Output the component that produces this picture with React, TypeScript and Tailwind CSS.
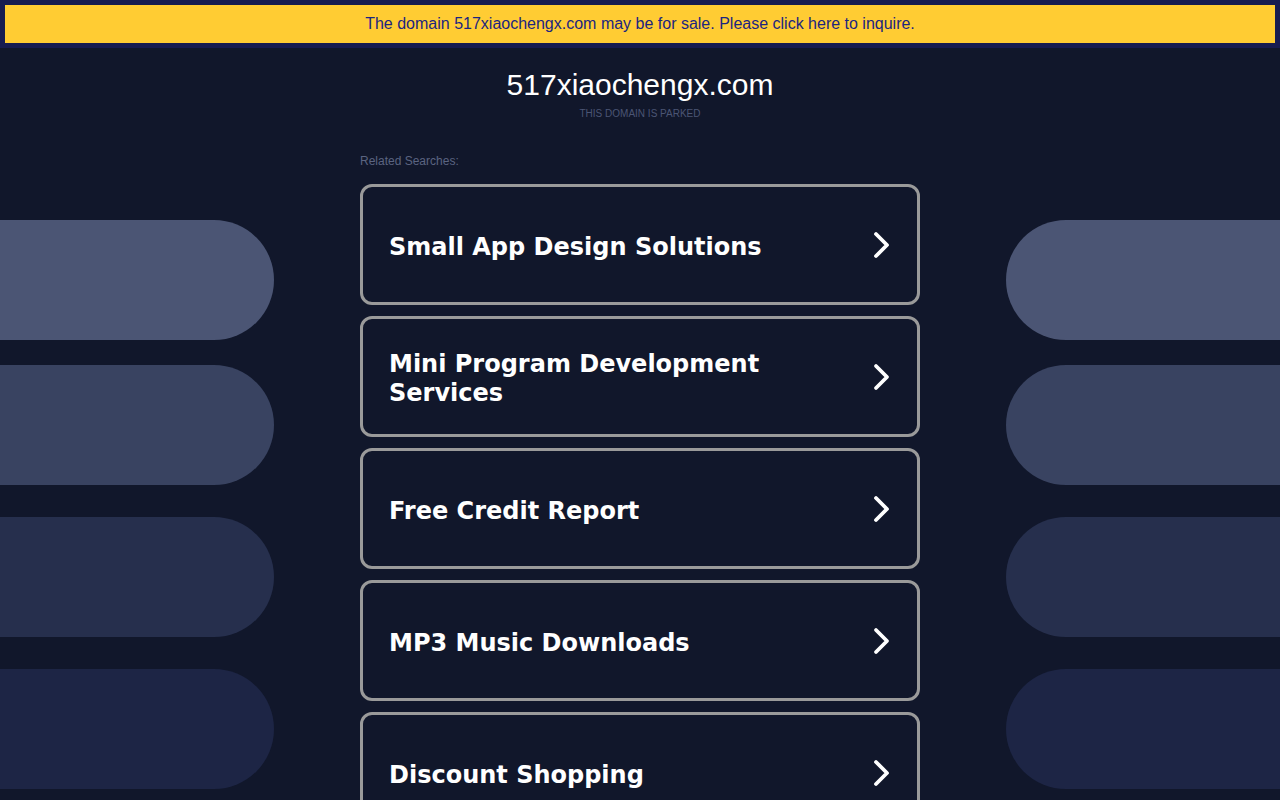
import React from 'react';

const searches = [
  'Small App Design Solutions',
  'Mini Program Development Services',
  'Free Credit Report',
  'MP3 Music Downloads',
  'Discount Shopping',
];

const pills = [
  { color: 'bg-[#4b5574]', gap: 'mt-0' },
  { color: 'bg-[#394361]', gap: 'mt-[25px]' },
  { color: 'bg-[#262f4d]', gap: 'mt-[32px]' },
  { color: 'bg-[#1d2545]', gap: 'mt-[32px]' },
];

function Chevron() {
  return (
    <svg width="22" height="30" viewBox="0 0 22 30" fill="none">
      <path d="M5 4 L16 15 L5 26" stroke="#ffffff" strokeWidth="3.8" strokeLinecap="round" strokeLinejoin="round" />
    </svg>
  );
}

function PillColumn({ side }: { side: 'left' | 'right' }) {
  return (
    <div className="w-[274px] shrink-0 pt-[172px] flex flex-col">
      {pills.map((p, i) => (
        <div
          key={i}
          className={`h-[120px] ${p.color} ${p.gap} ${side === 'left' ? 'rounded-r-[60px]' : 'rounded-l-[60px]'}`}
        />
      ))}
    </div>
  );
}

export default function App() {
  return (
    <div className="w-full h-[800px] overflow-hidden bg-[#11172b] font-['Liberation_Sans',Arial,sans-serif]">
      {/* sale banner */}
      <div className="bg-[#171c50] p-[5px]">
        <div className="h-[38px] bg-[#ffcc33] flex items-center justify-center text-[16px] text-[#1b2580]">
          The domain 517xiaochengx.com may be for sale. Please click here to inquire.
        </div>
      </div>

      <div className="flex justify-between">
        <PillColumn side="left" />

        <div className="w-[560px] flex flex-col">
          <div className="pt-[19px] text-center text-[30px] leading-[36px] text-white">517xiaochengx.com</div>
          <div className="mt-[5px] text-center text-[10px] leading-[12px] text-[#4b5574]">THIS DOMAIN IS PARKED</div>
          <div className="mt-[34px] text-[12px] leading-[14px] text-[#5b6481]">Related Searches:</div>

          <div className="mt-[16px] flex flex-col gap-[11px]">
            {searches.map((s) => (
              <div
                key={s}
                className="h-[121px] shrink-0 border-[3px] border-[#9a9a9a] rounded-[12px] flex items-center justify-between pl-[26px] pr-[24px]"
              >
                <span className="pt-[5px] font-['DejaVu_Sans',Verdana,sans-serif] font-bold text-[24px] leading-[29px] text-white max-w-[430px]">
                  {s}
                </span>
                <Chevron />
              </div>
            ))}
          </div>
        </div>

        <PillColumn side="right" />
      </div>
    </div>
  );
}
